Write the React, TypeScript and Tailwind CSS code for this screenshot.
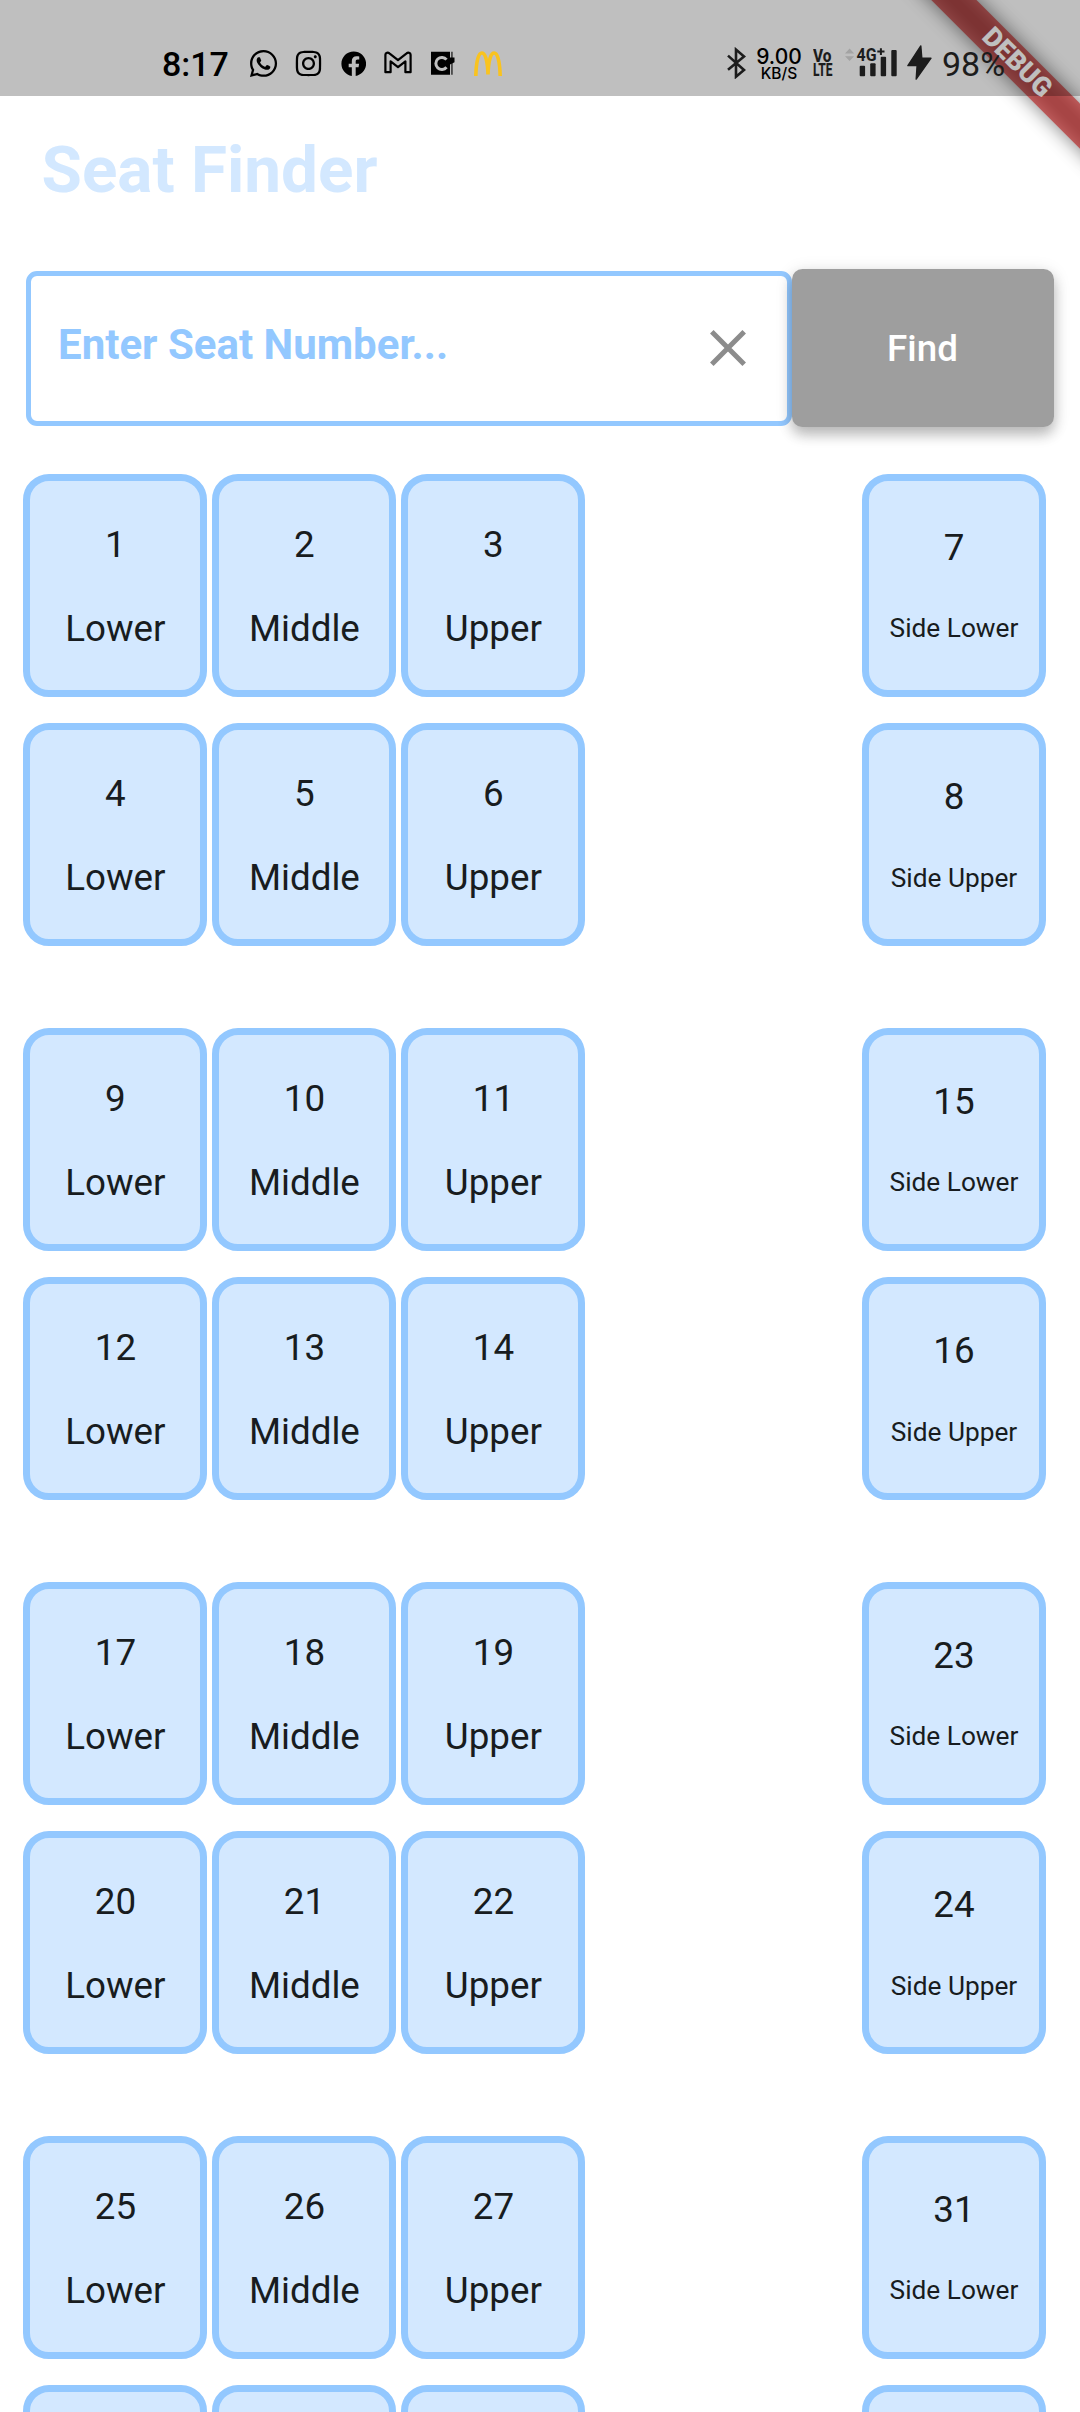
import React from "react";
import { FaWhatsapp, FaInstagram, FaFacebook } from "react-icons/fa";

type SeatInfo = { n: number; label: string };

const BAYS = [0, 8, 16, 24];

function Seat({ n, label, side = false }: SeatInfo & { side?: boolean }) {
  return (
    <div className="flex h-[223px] w-[184px] shrink-0 flex-col items-center justify-center rounded-[26px] border-[7px] border-[#93c8ff] bg-[#d3e8ff] pt-[3px] text-[#181c20]">
      <span className="text-[36.75px] leading-[52.5px]">{n}</span>
      {side ? (
        <span className="mt-[30px] text-[26.25px] leading-[48px] whitespace-nowrap">{label}</span>
      ) : (
        <span className="mt-[31.5px] text-[36.75px] leading-[52.5px]">{label}</span>
      )}
    </div>
  );
}

function SeatRow({ seats, side }: { seats: SeatInfo[]; side: SeatInfo }) {
  return (
    <div className="flex justify-between">
      <div className="flex gap-[5px]">
        {seats.map((s) => (
          <Seat key={s.n} {...s} />
        ))}
      </div>
      <Seat {...side} side />
    </div>
  );
}

function Bay({ base }: { base: number }) {
  return (
    <section className="flex h-[554px] shrink-0 flex-col gap-[26.3px]">
      <SeatRow
        seats={[
          { n: base + 1, label: "Lower" },
          { n: base + 2, label: "Middle" },
          { n: base + 3, label: "Upper" },
        ]}
        side={{ n: base + 7, label: "Side Lower" }}
      />
      <SeatRow
        seats={[
          { n: base + 4, label: "Lower" },
          { n: base + 5, label: "Middle" },
          { n: base + 6, label: "Upper" },
        ]}
        side={{ n: base + 8, label: "Side Upper" }}
      />
    </section>
  );
}

function DebugBanner() {
  return (
    <div className="absolute top-0 right-0 h-[240px] w-[240px] overflow-hidden">
      <div className="absolute top-[47px] left-[42px] h-[31.5px] w-[270px] rotate-45">
        <div className="absolute inset-0 bg-black/50 blur-[9.6px]" />
        <div className="relative flex h-full items-center justify-center bg-[#b71c1c]/63">
          <span className="text-[26.8px] leading-none font-black text-white">DEBUG</span>
        </div>
      </div>
    </div>
  );
}

function StatusBar() {
  return (
    <header className="absolute inset-x-0 top-0 flex h-24 items-start bg-black/25 text-black">
      <span className="mt-[44px] ml-[162px] w-[88px] text-[34px] leading-[40px] font-medium">8:17</span>
      <FaWhatsapp className="mt-[47.5px] ml-[-2px] size-[31px] shrink-0" />
      <FaInstagram className="mt-[49px] ml-[15px] size-[29px] shrink-0" />
      <FaFacebook className="mt-[50.5px] ml-[17.5px] size-[25.5px] shrink-0" />
      <svg className="mt-[51px] ml-[17.5px] h-6 w-7 shrink-0" viewBox="0 0 28 24" fill="none" stroke="currentColor" strokeWidth="2.2" strokeLinejoin="round">
        <path d="M1.4 3.8v17.4h5.2V10.4l7.4 5.8 7.4-5.8v10.8h5.2V3.8C26.6 1.6 24 1.2 22.6 2.4L14 9.2 5.4 2.4C4 1.2 1.4 1.6 1.4 3.8Z" />
      </svg>
      <svg className="mt-[51px] ml-[19px] h-6 w-6 shrink-0" viewBox="0 0 24 24">
        <path d="M0 .8h19v23H0zM20.4.8h1.1v23h-1.1z" fill="currentColor" />
        <path d="M18 6.5h5.5v4.8L19 13.5z" fill="currentColor" />
        <path d="M15.5 8.6a6 6 0 1 0 0 7.6" fill="none" stroke="#bfbfbf" strokeWidth="3" />
      </svg>
      <svg className="mt-[51px] ml-[19px] h-[25px] w-7 shrink-0" viewBox="0 0 28 25" fill="none" stroke="#f9c31f" strokeWidth="3.6">
        <path d="M1.8 25C2.2 11 4.2 2 7.8 2S13.6 10 14 23.5C14.4 10 16.6 2 20.2 2S25.8 11 26.2 25" />
      </svg>

      <svg className="mt-[47px] ml-[225px] h-8 w-5 shrink-0" viewBox="0 0 20 32" fill="none" stroke="#1c1c1c" strokeWidth="2.6">
        <path d="M1 8.6 17 23l-8 6.7V2.6L17 9.4 1 22.8" />
      </svg>
      <div className="mt-[46px] ml-[8.5px] flex w-[48px] flex-col items-center font-[Inter] leading-none font-medium">
        <span className="text-[21px] leading-[22px]">9.00</span>
        <span className="text-[15.5px] leading-[11px]">KB/S</span>
      </div>
      <svg className="mt-[48px] ml-[10px] h-8 w-5 shrink-0 font-[Roboto] font-extrabold" viewBox="0 0 20 32" fill="#1c1c1c">
        <text x="0" y="14" fontSize="17.5" textLength="18.5" lengthAdjust="spacingAndGlyphs">Vo</text>
        <text x="0" y="27.9" fontSize="17.5" textLength="19.5" lengthAdjust="spacingAndGlyphs">LTE</text>
      </svg>
      <svg className="mt-[46px] ml-[12px] h-8 w-[54px] shrink-0 font-[Roboto] font-bold" viewBox="0 0 54 32" fill="#1c1c1c">
        <path d="M0 7.4 4.6 2.6 9.2 7.4zM0 10.2h9.2L4.6 15z" fill="#a3a3a3" />
        <text x="11.5" y="15.4" fontSize="18.5" textLength="20" lengthAdjust="spacingAndGlyphs">4G</text>
        <path d="M34.9 2.2h2v2.4h2.6v2h-2.6V9h-2V6.6h-2.6v-2h2.6z" />
        <rect x="14.7" y="19.8" width="5.4" height="10.4" rx="1" />
        <rect x="25.2" y="17.3" width="5.4" height="12.9" rx="1" />
        <rect x="35.7" y="10.8" width="5.4" height="19.4" rx="1" />
        <rect x="46.3" y="4" width="5.4" height="26.2" rx="1" />
      </svg>
      <svg className="mt-[45px] ml-[8px] h-[35px] w-[25px] shrink-0" viewBox="0 0 25 35" fill="#1c1c1c" stroke="#1c1c1c" strokeWidth="1.4" strokeLinejoin="round">
        <path d="M13.8.9 .9 20.6h9.2L9.2 34.1 24 13.2h-9.2z" />
      </svg>
      <span className="mt-[44px] ml-[10px] text-[34px] leading-[40px] text-[#1c1c1c]">98%</span>
    </header>
  );
}

export default function App() {
  return (
    <div className="relative flex h-[2412px] w-[1080px] flex-col overflow-hidden bg-white font-[Roboto,sans-serif]">
      <h1 className="mt-24 ml-[41.5px] h-[173px] shrink-0 pt-[35px] text-[65.6px] leading-[78px] font-bold text-[#d3e8ff]">Seat Finder</h1>

      <div className="flex h-[158px] shrink-0 items-center pl-[26px]">
        <div className="flex h-[155px] w-[766px] items-center justify-between rounded-[11px] border-[5px] border-[#93c8ff] pr-[41px] pl-[27px]">
          <span className="-mt-[6px] text-[42px] leading-[50px] font-bold text-[#93c8ff]">Enter Seat Number...</span>
          <svg className="size-9" viewBox="0 0 36 36" stroke="#8c8c8c" strokeWidth="5">
            <path d="m1.8 1.8 32.4 32.4M34.2 1.8 1.8 34.2" />
          </svg>
        </div>
        <button className="h-[158px] w-[262px] rounded-[10.5px] bg-[#9e9e9e] pt-[2px] pr-[1px] text-[36.75px] font-medium text-white shadow-[0_8px_13px_rgba(0,0,0,0.22),0_3px_18px_rgba(0,0,0,0.12)]">
          Find
        </button>
      </div>

      <main className="mt-[47px] flex flex-col pr-[34px] pl-[23.4px]">
        {BAYS.map((base) => (
          <Bay key={base} base={base} />
        ))}
      </main>

      <DebugBanner />
      <StatusBar />
    </div>
  );
}
